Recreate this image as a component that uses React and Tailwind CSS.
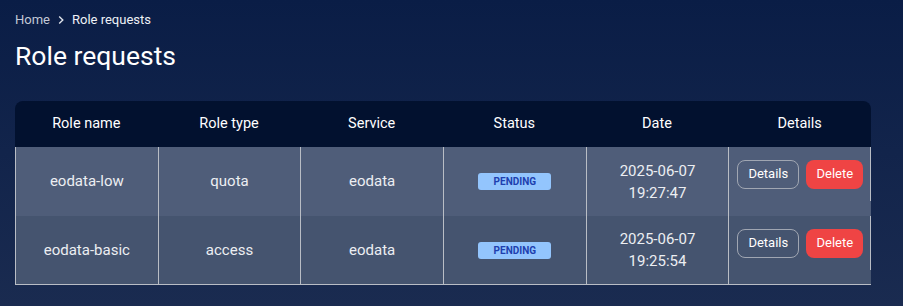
import React from "react";

const rows = [
  { name: "eodata-low", type: "quota", service: "eodata", date: "2025-06-07", time: "19:27:47", bg: "bg-[#4f5d79]" },
  { name: "eodata-basic", type: "access", service: "eodata", date: "2025-06-07", time: "19:25:54", bg: "bg-[#45546f]" },
];

export default function App() {
  return (
    <div
      className="w-[903px] h-[306px] overflow-hidden bg-gradient-to-b from-[#0a1d46] to-[#1a2b50] px-[15px] pt-[11px] text-white"
      style={{ fontFamily: "Roboto, 'Noto Sans', sans-serif" }}
    >
      <div className="flex items-center gap-[6px] text-[13px] leading-[18px]">
        <span className="text-[#c3c9d6]">Home</span>
        <svg width="10" height="10" viewBox="0 0 10 10" className="text-[#dfe3ea]">
          <path d="M3.2 1.5 L6.8 5 L3.2 8.5" fill="none" stroke="currentColor" strokeWidth="1.4" />
        </svg>
        <span className="text-[#eef1f6]">Role requests</span>
      </div>
      <h1 className="mt-[9px] text-[26.5px] leading-[36px] font-normal text-white">Role requests</h1>
      <div className="mt-[27px] w-[856px]">
        <div className="grid grid-cols-6 h-[46px] items-center rounded-t-lg bg-[#02112f] text-[14.5px] text-white">
          <div className="text-center">Role name</div>
          <div className="text-center">Role type</div>
          <div className="text-center">Service</div>
          <div className="text-center">Status</div>
          <div className="text-center">Date</div>
          <div className="text-center">Details</div>
        </div>
        <div className="border-b border-[#b9bdc5]">
          {rows.map((r, i) => (
            <div key={i} className={`grid grid-cols-6 ${i === 0 ? "h-[69px]" : "h-[68px]"} ${r.bg} text-[15px] text-[#eceef2]`}>
              <div className="flex items-center justify-center border-l border-[#b9bdc5]">{r.name}</div>
              <div className="flex items-center justify-center border-l border-[#b9bdc5]">{r.type}</div>
              <div className="flex items-center justify-center border-l border-[#b9bdc5]">{r.service}</div>
              <div className="flex items-center justify-center border-l border-[#b9bdc5]">
                <span className="flex h-[17px] w-[73px] items-center justify-center rounded-[3px] bg-[#93c5fd] text-[10px] font-bold text-[#1e40af]">
                  PENDING
                </span>
              </div>
              <div className="flex flex-col items-center justify-center border-l border-[#b9bdc5] leading-[22px]">
                <span>{r.date}</span>
                <span>{r.time}</span>
              </div>
              <div className="border-l border-[#b9bdc5]">
                <div className="flex h-[54px] items-center gap-[7px] border-r border-[#b9bdc5] pl-[8px]">
                  <button className="h-[29px] w-[62px] rounded-lg border border-[#a0a6b2] text-[13px] text-white">Details</button>
                  <button className="h-[29px] w-[57px] rounded-lg bg-[#ef4444] text-[13px] text-white">Delete</button>
                </div>
              </div>
            </div>
          ))}
        </div>
      </div>
    </div>
  );
}
